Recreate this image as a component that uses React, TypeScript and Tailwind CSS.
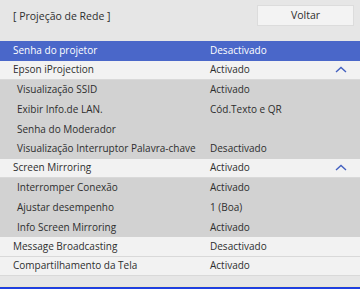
const rows = [
  { label: "Senha do projetor", value: "Desactivado", kind: "selected" },
  { label: "Epson iProjection", value: "Activado", kind: "top", open: true },
  { label: "Visualização SSID", value: "Activado", kind: "sub" },
  { label: "Exibir Info.de LAN.", value: "Cód.Texto e QR", kind: "sub" },
  { label: "Senha do Moderador", value: "", kind: "sub" },
  { label: "Visualização Interruptor Palavra-chave", value: "Desactivado", kind: "sub" },
  { label: "Screen Mirroring", value: "Activado", kind: "top", open: true },
  { label: "Interromper Conexão", value: "Activado", kind: "sub" },
  { label: "Ajustar desempenho", value: "1 (Boa)", kind: "sub" },
  { label: "Info Screen Mirroring", value: "Activado", kind: "sub" },
  { label: "Message Broadcasting", value: "Desactivado", kind: "top" },
  { label: "Compartilhamento da Tela", value: "Activado", kind: "top" },
];

const ChevronUp = () => (
  <svg width="12" height="7" viewBox="0 0 12 7" fill="none">
    <path d="M1 6 L6 1.5 L11 6" stroke="#4360c0" strokeWidth="1.4" />
  </svg>
);

export default function App() {
  return (
    <div
      className="w-[360px] h-[289px] bg-[#e6e6e6] flex flex-col text-[#2e2e2e] text-[10px] overflow-hidden"
      style={{ fontFamily: '"Open Sans", "Noto Sans", sans-serif' }}
    >
      {/* Header */}
      <div className="h-[41px] flex items-start justify-between pl-[13px] pr-[6px]">
        <span className="mt-[9px] text-[10.5px]">[ Projeção de Rede ]</span>
        <button className="mt-[5px] w-[97px] h-[21px] bg-[#f3f3f3] border border-[#dcdcdc] text-[10.5px]">
          Voltar
        </button>
      </div>

      {/* List */}
      <div className="flex flex-col">
        {rows.map((r, i) => {
          const bg =
            r.kind === "selected"
              ? "bg-[#4a67c9] text-white"
              : r.kind === "top"
              ? "bg-[#f2f2f2] border-b border-[#d9d9d9]"
              : "bg-[#d2d2d2]";
          return (
            <div key={i} className={`h-[19.6px] flex items-center pr-[13px] ${bg}`}>
              <span
                className={`w-[210px] shrink-0 whitespace-nowrap ${
                  r.kind === "sub" ? "pl-[17px]" : "pl-[13px]"
                }`}
              >
                {r.label}
              </span>
              <span className="flex-1">{r.value}</span>
              {r.open && <ChevronUp />}
            </div>
          );
        })}
      </div>

      <div className="flex-1" />
      <div className="h-[1px] bg-[#e9e6cf]" />
      <div className="h-[2px] bg-[#1f3fe0]" />
    </div>
  );
}
